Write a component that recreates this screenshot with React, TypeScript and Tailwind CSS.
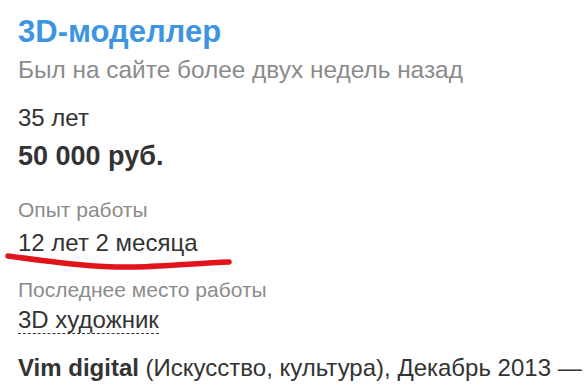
import React from 'react';

export default function App() {
    return (
        <div className="w-[586px] h-[390px] overflow-hidden bg-white pl-[18px] pt-[14px] font-['Liberation_Sans',Arial,sans-serif] text-[#333333]">
            <h1 className="text-[31px] leading-[36px] font-bold text-[#3d95e2]">3D-моделлер</h1>
            <p className="text-[24.4px] leading-[28px] text-[#8b8b8b] mt-[6px] whitespace-nowrap">
                Был на сайте более двух недель назад
            </p>

            <p className="text-[24px] leading-[28px] mt-[20px]">35 лет</p>
            <p className="text-[27px] leading-[32px] font-bold mt-[8px]">50 000 руб.</p>

            <div className="mt-[26px]">
                <p className="text-[21px] leading-[24px] text-[#8b8b8b]">Опыт работы</p>
                <div className="relative mt-[7px]">
                    <p className="text-[24px] leading-[28px]">12 лет 2 месяца</p>
                    {/* red marker underline */}
                    <svg
                        className="absolute left-[-18px] top-[20px]"
                        width="240"
                        height="28"
                        viewBox="0 0 240 28"
                    >
                        <path
                            d="M8 7 C 60 14, 100 19, 135 18 C 170 17, 200 14, 229 13"
                            stroke="#e3131b"
                            strokeWidth="5.5"
                            strokeLinecap="round"
                            fill="none"
                        />
                    </svg>
                </div>
            </div>

            <div className="mt-[21px]">
                <p className="text-[21px] leading-[24px] text-[#8b8b8b] whitespace-nowrap">Последнее место работы</p>
                <p className="mt-[4px] text-[24px] leading-[28px]">
                    <span className="border-b border-dashed border-[#333333]">3D художник</span>
                </p>
            </div>

            <p className="mt-[20px] text-[24px] leading-[28px] whitespace-nowrap">
                <span className="font-bold">Vim digital</span> (Искусство, культура), Декабрь 2013 —
            </p>
        </div>
    );
}
